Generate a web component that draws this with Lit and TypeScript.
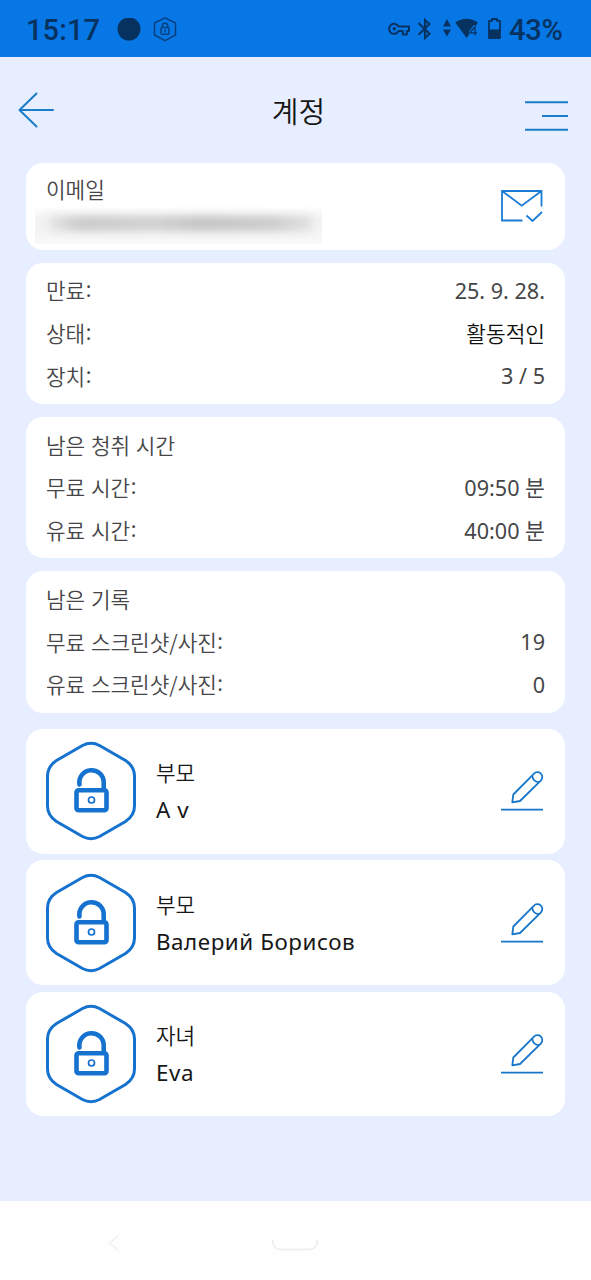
import { LitElement, html, css } from "lit";
import { customElement, property } from "lit/decorators.js";

type Row = { label: string; value?: string; strong?: boolean };

const groups: Row[][] = [
  [
    { label: "만료:", value: "25. 9. 28." },
    { label: "상태:", value: "활동적인", strong: true },
    { label: "장치:", value: "3 / 5" },
  ],
  [
    { label: "남은 청취 시간" },
    { label: "무료 시간:", value: "09:50 분" },
    { label: "유료 시간:", value: "40:00 분" },
  ],
  [
    { label: "남은 기록" },
    { label: "무료 스크린샷/사진:", value: "19" },
    { label: "유료 스크린샷/사진:", value: "0" },
  ],
];

const members = [
  { role: "부모", name: "A v" },
  { role: "부모", name: "Валерий Борисов" },
  { role: "자녀", name: "Eva" },
];

@customElement("status-bar")
class StatusBar extends LitElement {
  static styles = css`
    :host {
      display: flex;
      align-items: center;
      height: 57px;
      box-sizing: border-box;
      padding: 2px 28px 0 26px;
      background: #0877e6;
      color: #07325f;
      font: 500 29px/34px Roboto, sans-serif;
    }
    svg { display: block; flex: none; }
    .time { width: 91px; letter-spacing: 0.1px; }
    .hex { margin-left: 12px; }
    .right { display: flex; align-items: center; margin-left: auto; }
    .bt { margin-left: 7px; }
    .arrows { margin-left: 11px; }
    .wifi { margin-left: 4px; }
    .battery { margin-left: 9px; }
    .percent { margin-left: 8px; width: 54px; white-space: nowrap; letter-spacing: -0.2px; }
  `;
  render() {
    return html`
      <span class="time">15:17</span>
      <svg width="24" height="24"><circle cx="12" cy="11" r="11.5" fill="#07325f" /></svg>
      <svg class="hex" width="24" height="26" viewBox="0 0 24 26" fill="none" stroke="#07407f" stroke-width="1.5">
        <path d="M12 .8L22.500 6V18L12 23.600L1.500 18V6Z" stroke-linejoin="round" />
        <rect x="8" y="10.500" width="8" height="6.800" rx="1" />
        <path d="M9.300 10.300V9a2.700 2.700 0 0 1 5.400 0V10.300M12 12.500v2.800" />
      </svg>
      <div class="right">
        <svg width="22" height="26" viewBox="0 0 22 26" fill="none" stroke="#07325f" stroke-width="2">
          <path d="M10.500 9.500h10.500v4.600h-2.200v3.300h-4v-3.300H10.500a5 5 0 1 1 0-4.600Z" stroke-linejoin="round" />
          <circle cx="6.300" cy="11.800" r="1.700" fill="#07325f" stroke="none" />
        </svg>
        <svg class="bt" width="15" height="26" viewBox="0 0 15 26" fill="none" stroke="#07325f" stroke-width="2.100">
          <path d="M1.500 6L12.500 16.800L8 21V3L12.500 7L1.500 17.800" />
        </svg>
        <svg class="arrows" width="8" height="26" viewBox="0 0 8 26" fill="#07325f">
          <path d="M4 2L8 9.500H0ZM4 19.500L0 12.500H8Z" />
        </svg>
        <svg class="wifi" width="24" height="26" viewBox="0 0 24 26">
          <path d="M.3 5.500Q11.500-2 22.800 5.500L21.500 8H18.800L14 14.500V17.500L11.600 21Z" fill="#07325f" />
          <path d="M20 18.500V9.500L15 15.800H22" fill="none" stroke="#07325f" stroke-width="1.300" />
        </svg>
        <svg class="battery" width="13" height="26" viewBox="0 0 13 26">
          <path d="M1 3.800H4V2H9V3.800H12V21H1Z" fill="none" stroke="#07325f" stroke-width="1.800" stroke-linejoin="round" />
          <path d="M1 12.500H12V21H1Z" fill="#07325f" />
        </svg>
        <span class="percent">43%</span>
      </div>
    `;
  }
}

@customElement("info-card")
class InfoCard extends LitElement {
  @property({ attribute: false }) rows: Row[] = [];
  static styles = css`
    :host {
      display: block;
      box-sizing: border-box;
      height: 141.4px;
      padding: 6.8px 20px;
      border-radius: 17px;
      background: #fff;
      color: #464648;
    }
    .row {
      display: flex;
      justify-content: space-between;
      height: 42.7px;
      line-height: 42.7px;
      white-space: nowrap;
    }
    .label { font-family: "Noto Sans CJK KR", sans-serif; font-size: 21.3px; font-weight: 350; word-spacing: 1px; }
    .colon { vertical-align: 2px; line-height: 0; margin-left: 0.5px; }
    .value { font-family: "Noto Sans", "Noto Sans CJK KR", sans-serif; font-size: 21.6px; padding-top: 0.6px; }
    .strong { color: #111; font-size: 21.4px; font-weight: 350; }
  `;
  render() {
    return this.rows.map((r) => {
      const marked = r.label.endsWith(":");
      const text = marked ? r.label.slice(0, -1) : r.label;
      return html`<div class="row">
        <span class="label">${text}${marked ? html`<span class="colon">:</span>` : ""}</span>
        <span class="value ${r.strong ? "strong" : ""}">${r.value ?? ""}</span>
      </div>`;
    });
  }
}

@customElement("member-card")
class MemberCard extends LitElement {
  @property() role = "";
  @property() name = "";
  static styles = css`
    :host {
      display: flex;
      align-items: center;
      box-sizing: border-box;
      height: 124.6px;
      padding: 0 21px 0 19px;
      border-radius: 17px;
      background: #fff;
      color: #171717;
    }
    svg { display: block; flex: none; }
    .text { flex: 1; margin-left: 19px; white-space: nowrap; }
    .role { font: 350 21.3px/37px "Noto Sans CJK KR", sans-serif; }
    .name { font: 22.400px/39px "Noto Sans", sans-serif; letter-spacing: 0.550px; }
  `;
  render() {
    return html`
      <svg width="92" height="100" viewBox="0 0 92 100" fill="none" stroke="#1672cf">
        <path
          stroke-width="3"
          d="M37.500 4.500Q46 0 54.500 4.500L80.500 19.500Q89.500 25.500 89.500 35V65Q89.500 74.500 80.500 80.500L54.500 95.500Q46 100 37.500 95.500L11.500 80.500Q2.500 74.500 2.500 65V35Q2.500 25.500 11.500 19.500Z"
        />
        <rect x="31.500" y="49.300" width="30" height="20" rx="2" stroke-width="4.600" />
        <path d="M34.500 43.500A12.200 12.200 0 1 1 58.700 42V48" stroke-width="4.600" stroke-linecap="round" />
        <circle cx="46.500" cy="59" r="3" stroke-width="1.700" />
      </svg>
      <div class="text">
        <div class="role">${this.role}</div>
        <div class="name">${this.name}</div>
      </div>
      <svg width="44" height="44" viewBox="0 0 44 44" fill="none" stroke="#1676c9" stroke-width="1.800">
        <path d="M12.300 33.300L13.300 25.500L33.800 4.800A4.700 4.700 0 0 1 41 11.300L20 32Z" stroke-linejoin="round" />
        <path d="M32.300 7Q33 13 39.500 13.200M1 40.600H43" />
      </svg>
    `;
  }
}

@customElement("app-root")
class AppRoot extends LitElement {
  static styles = css`
    :host {
      display: flex;
      flex-direction: column;
      height: 1280px;
      overflow: hidden;
      background: #e7eeff;
      font-family: "Noto Sans", "Noto Sans CJK KR", sans-serif;
    }
    svg { display: block; flex: none; }
    .header {
      display: grid;
      grid-template-columns: 60px 1fr 60px;
      align-items: center;
      height: 105.500px;
      padding: 0 10px 0 16px;
      box-sizing: border-box;
    }
    .title {
      margin: 0;
      text-align: center;
      color: #161616;
      font: 350 29px/40px "Noto Sans CJK KR", sans-serif;
    }
    .menu { justify-self: end; margin: 13px 13px 0 0; }
    .main { flex: 1; padding: 0 26px; }
    .groups, .members { display: flex; flex-direction: column; }
    .groups { gap: 13px; }
    .members { gap: 6.700px; margin-top: 16.300px; }
    .email {
      display: flex;
      justify-content: space-between;
      height: 87px;
      box-sizing: border-box;
      padding: 9.500px 21px 0 9px;
      border-radius: 17px;
      background: #fff;
    }
    .email-label {
      padding-left: 11px;
      color: #464648;
      font: 350 21.300px/34px "Noto Sans CJK KR", sans-serif;
    }
    .mask {
      width: 287px;
      height: 38px;
      box-sizing: border-box;
      padding: 10px 10px 0 14px;
      overflow: hidden;
      background: linear-gradient(#fff, #f2f2f2 35%, #f4f4f4 65%, #f9f9f9);
    }
    .smudge {
      height: 15px;
      background: linear-gradient(90deg, #e6e6e6, #c9c9c9 12%, #d0d0d0 40%, #c3c3c3 58%, #cbcbcb 85%, #e2e2e2);
      filter: blur(4px);
    }
    .mail { margin-top: 15.500px; }
    .nav {
      display: flex;
      height: 79px;
      background: #fefefe;
      padding-left: 108px;
    }
    .back { margin-top: 32px; }
    .home { margin: 37px 0 0 151px; }
  `;
  render() {
    return html`
      <status-bar></status-bar>
      <div class="header">
        <svg width="40" height="40" viewBox="0 0 40 40" fill="none" stroke="#1b7cc9" stroke-width="2" stroke-linecap="round" stroke-linejoin="round">
          <path d="M20.500 3.500L3.500 20L20.500 36.500M3.500 20H37" />
        </svg>
        <h1 class="title">계정</h1>
        <svg class="menu" width="44" height="32" viewBox="0 0 44 32" fill="none" stroke="#1b7cc9" stroke-width="2">
          <path d="M1 2.300H44M18 16H44M1 29.800H44" />
        </svg>
      </div>
      <div class="main">
        <div class="groups">
          <div class="email">
            <div>
              <div class="email-label">이메일</div>
              <div class="mask"><div class="smudge"></div></div>
            </div>
            <svg class="mail" width="44" height="36" viewBox="0 0 44 36" fill="none" stroke="#1b7cd4" stroke-width="1.800">
              <path d="M22.500 32.500H2V3H41.500V18.500M2 3L21.700 17.700L41.500 3M26.500 27.500L32.500 33L42 24" />
            </svg>
          </div>
          ${groups.map((g) => html`<info-card .rows=${g}></info-card>`)}
        </div>
        <div class="members">
          ${members.map((m) => html`<member-card role=${m.role} name=${m.name}></member-card>`)}
        </div>
      </div>
      <div class="nav">
        <svg class="back" width="12" height="20" viewBox="0 0 12 20" fill="none" stroke="#f4f4f4" stroke-width="2">
          <path d="M10.500 2L2 10L10.500 18" />
        </svg>
        <svg class="home" width="48" height="14" viewBox="0 0 48 14" fill="none" stroke="#ececec" stroke-width="1.500">
          <path d="M1.500 2Q2 11.500 10 11.500H38Q46 11.500 46.500 2" />
        </svg>
      </div>
    `;
  }
}
